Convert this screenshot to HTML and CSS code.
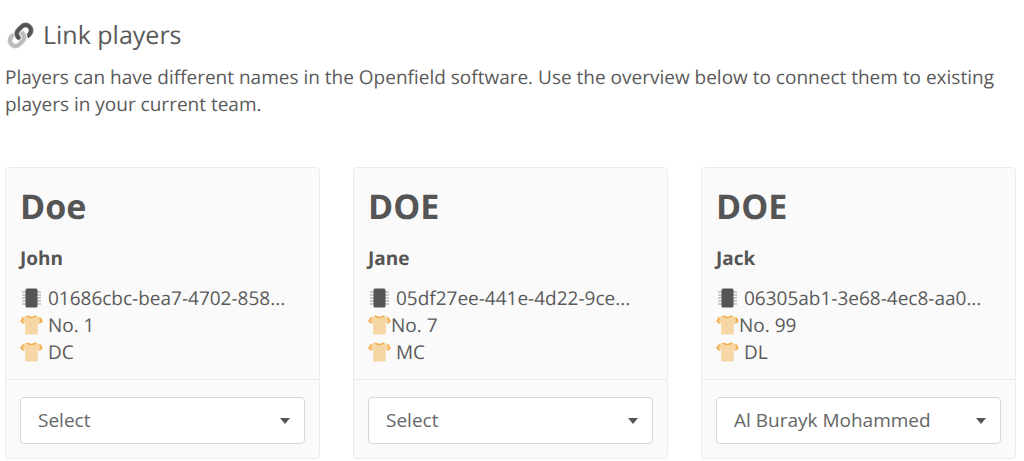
FILE: index.html
```
<!DOCTYPE html>
<html lang="en">
<head>
    <meta charset="UTF-8">
    <meta name="viewport" content="width=device-width, initial-scale=1.0">
    <title>Link players</title>
    <link rel="stylesheet" href="styles.css">
</head>
<body>
    <!-- shared icons -->
    <svg class="sprite" aria-hidden="true">
        <symbol id="icon-chip" viewBox="0 0 23 20">
            <path d="M2 4h4M2 7h4M2 10h4M2 13h4M2 16h4M17 4h4M17 7h4M17 10h4M17 13h4M17 16h4" stroke="#bbb" stroke-width="1.3"/>
            <rect x="5.5" y="0.5" width="12" height="19" rx="1.5" fill="#555"/>
        </symbol>
        <symbol id="icon-shirt" viewBox="0 0 23 20">
            <path fill="#f7d6a5" d="M7.500.5C9 2.600 14 2.600 15.500.5L20.500 2.300 22.800 6.200 19.800 8.800 17.800 7.800V18.500a1 1 0 0 1-1 1H6.200a1 1 0 0 1-1-1V7.800L3.200 8.800.2 6.200 2.500 2.300Z"/>
            <path fill="none" stroke="#f2ac4b" stroke-width="1.400" d="M7.200.7C9 3 14 3 15.800.7"/>
            <path fill="#f2ac4b" d="M2.500 2.300 4 3.200 2.400 6.100 4.200 8.300 3.200 8.800.2 6.200ZM20.500 2.300 19 3.200 20.600 6.100 18.800 8.300 19.800 8.800 22.800 6.200Z"/>
        </symbol>
    </svg>

    <div class="container">
        <h1 class="title">
            <svg class="link-icon" viewBox="0 0 512 512" aria-hidden="true">
                <path fill="#bbb" stroke="#bbb" stroke-width="14" d="M326.612 185.391c59.747 59.809 58.927 155.698.36 214.59-.11.12-.24.25-.36.37l-67.2 67.2c-59.27 59.27-155.699 59.262-214.96 0-59.27-59.26-59.27-155.7 0-214.96l37.106-37.106c9.84-9.84 26.786-3.3 27.294 10.606.648 17.722 3.826 35.527 9.69 52.721 1.986 5.822.567 12.262-3.783 16.612l-13.087 13.087c-28.026 28.026-28.905 73.66-1.155 101.96 28.024 28.579 74.086 28.749 102.325.51l67.2-67.19c28.191-28.191 28.073-73.757 0-101.83-3.701-3.694-7.429-6.564-10.341-8.569a16.037 16.037 0 0 1-6.947-12.606c-.396-10.567 3.348-21.456 11.698-29.806l21.054-21.055c5.521-5.521 14.182-6.199 20.584-1.731a152.482 152.482 0 0 1 20.522 17.197z"/>
                <path fill="#555" stroke="#555" stroke-width="14" d="M467.547 44.449c-59.261-59.262-155.69-59.27-214.96 0l-67.2 67.2c-.12.12-.25.25-.36.37-58.566 58.892-59.387 154.781.36 214.59a152.454 152.454 0 0 0 20.521 17.196c6.402 4.468 15.064 3.789 20.584-1.731l21.054-21.055c8.35-8.35 12.094-19.239 11.698-29.806a16.037 16.037 0 0 0-6.947-12.606c-2.912-2.005-6.64-4.875-10.341-8.569-28.073-28.073-28.191-73.639 0-101.83l67.2-67.19c28.239-28.239 74.3-28.069 102.325.51 27.75 28.3 26.872 73.934-1.155 101.96l-13.087 13.087c-4.35 4.35-5.769 10.79-3.783 16.612 5.864 17.194 9.042 34.999 9.69 52.721.509 13.906 17.454 20.446 27.294 10.606l37.106-37.106c59.271-59.259 59.271-155.699.001-214.959z"/>
            </svg>
            Link players
        </h1>
        <p class="intro">Players can have different names in the Openfield software. Use the overview below to connect them to existing players in your current team.</p>

        <div class="players">
            <div class="card">
                <div class="card-body">
                    <h2>Doe</h2>
                    <h3>John</h3>
                    <div class="info"><svg class="icon"><use href="#icon-chip"/></svg> 01686cbc-bea7-4702-858...</div>
                    <div class="info"><svg class="icon"><use href="#icon-shirt"/></svg> No. 1</div>
                    <div class="info"><svg class="icon"><use href="#icon-shirt"/></svg> DC</div>
                </div>
                <div class="card-footer">
                    <div class="dropdown">
                        <select aria-label="Player for John Doe">
                            <option>Select</option>
                            <option>Al Burayk Mohammed</option>
                        </select>
                    </div>
                </div>
            </div>

            <div class="card">
                <div class="card-body">
                    <h2>DOE</h2>
                    <h3>Jane</h3>
                    <div class="info"><svg class="icon"><use href="#icon-chip"/></svg> 05df27ee-441e-4d22-9ce...</div>
                    <div class="info"><svg class="icon"><use href="#icon-shirt"/></svg>No. 7</div>
                    <div class="info"><svg class="icon"><use href="#icon-shirt"/></svg> MC</div>
                </div>
                <div class="card-footer">
                    <div class="dropdown">
                        <select aria-label="Player for Jane Doe">
                            <option>Select</option>
                            <option>Al Burayk Mohammed</option>
                        </select>
                    </div>
                </div>
            </div>

            <div class="card">
                <div class="card-body">
                    <h2>DOE</h2>
                    <h3>Jack</h3>
                    <div class="info"><svg class="icon"><use href="#icon-chip"/></svg> 06305ab1-3e68-4ec8-aa0...</div>
                    <div class="info"><svg class="icon"><use href="#icon-shirt"/></svg>No. 99</div>
                    <div class="info"><svg class="icon"><use href="#icon-shirt"/></svg> DL</div>
                </div>
                <div class="card-footer">
                    <div class="dropdown">
                        <select aria-label="Player for Jack Doe">
                            <option>Select</option>
                            <option selected>Al Burayk Mohammed</option>
                        </select>
                    </div>
                </div>
            </div>
        </div>
    </div>
</body>
</html>
```
FILE: styles.css
```
* {
    box-sizing: border-box;
}
body {
    font-family: "Open Sans", "Noto Sans", sans-serif;
    font-size: 19px;
    line-height: 27px;
    background-color: #fff;
    color: #5a5a5a;
    margin: 0;
    text-rendering: geometricPrecision;
}
h1, h2, h3, p {
    margin: 0;
}
.sprite {
    display: none;
}
.container {
    padding: 17px 8px 0 5px;
}
.title {
    display: flex;
    align-items: center;
    gap: 10px;
    padding-left: 3px;
    font-size: 25px;
    font-weight: normal;
    line-height: 36px;
}
.link-icon {
    width: 25px;
    height: 25px;
    overflow: visible;
}
.intro {
    margin-top: 11px;
}
.players {
    display: grid;
    grid-template-columns: repeat(3, 1fr);
    gap: 33px;
    margin-top: 49px;
}
.card {
    background-color: #fafafa;
    border: 1px solid #ececec;
    border-radius: 4px;
}
.card-body {
    padding: 13px 14px;
}
.card h2 {
    font-size: 34px;
    line-height: 50px;
    color: #555;
}
.card h3 {
    margin: 13px 0;
    font-size: 19px;
    line-height: 28px;
    color: #555;
}
.info {
    white-space: nowrap;
}
.icon {
    width: 23px;
    height: 20px;
    vertical-align: -3px;
}
.card-footer {
    padding: 17px 14px 14px;
    border-top: 1px solid #ececec;
}
.dropdown {
    position: relative;
}
.dropdown select {
    display: block;
    width: 100%;
    height: 47px;
    padding: 0 40px 0 17px;
    font: inherit;
    color: #666;
    background-color: #fff;
    border: 1px solid #d8d8d8;
    border-radius: 4px;
    appearance: none;
    cursor: pointer;
}
/* dropdown arrow */
.dropdown::after {
    content: "";
    position: absolute;
    top: 21px;
    right: 15px;
    border: 5px solid transparent;
    border-top: 6px solid #555;
    border-bottom: none;
    pointer-events: none;
}
```
